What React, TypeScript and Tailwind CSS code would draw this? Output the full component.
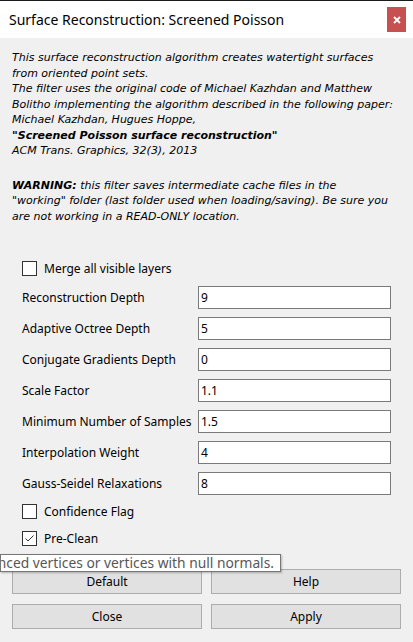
import React from "react";

const ui = "font-['Noto_Sans',sans-serif]";
const desc = "font-['DejaVu_Sans',sans-serif]";

const fields = [
  { label: "Reconstruction Depth", value: "9" },
  { label: "Adaptive Octree Depth", value: "5" },
  { label: "Conjugate Gradients Depth", value: "0" },
  { label: "Scale Factor", value: "1.1" },
  { label: "Minimum Number of Samples", value: "1.5" },
  { label: "Interpolation Weight", value: "4" },
  { label: "Gauss-Seidel Relaxations", value: "8" },
];

function CheckBox({ label, checked }: { label: string; checked?: boolean }) {
  return (
    <div className="flex items-center gap-[7px] h-[15px]">
      <div className="w-[15px] h-[15px] border border-[#333333] bg-white flex items-center justify-center">
        {checked && (
          <svg width="11" height="11" viewBox="0 0 11 11">
            <path d="M1.5 5.5 L4 8 L9.5 2.5" fill="none" stroke="#333" strokeWidth="1" />
          </svg>
        )}
      </div>
      <span className="text-[12px] text-black leading-none">{label}</span>
    </div>
  );
}

function Btn({ children }: { children: React.ReactNode }) {
  return (
    <button className="flex-1 h-[25px] bg-[#e1e1e1] border border-[#adadad] text-[12px] text-black">
      {children}
    </button>
  );
}

export default function App() {
  return (
    <div className={`relative w-[413px] h-[642px] bg-[#f0f0f0] border-t border-[#1a1a1a] overflow-hidden ${ui}`}>
      {/* title bar */}
      <div className="h-[37px] bg-white flex items-center justify-between pl-[9px] pr-[7px]">
        <span className="text-[14px] text-black">Surface Reconstruction: Screened Poisson</span>
        <div className="w-[19px] h-[25px] bg-[#c75050] flex items-center justify-center">
          <svg width="8" height="8" viewBox="0 0 8 8">
            <path d="M1 1 L7 7 M7 1 L1 7" stroke="white" strokeWidth="1.8" />
          </svg>
        </div>
      </div>

      <div className={`px-[12px] pt-[12px] text-[11px] leading-[15.5px] italic text-black whitespace-nowrap ${desc}`}>
        <p>
          This surface reconstruction algorithm creates watertight surfaces
          <br />
          from oriented point sets.
        </p>
        <p>
          The filter uses the original code of Michael Kazhdan and Matthew
          <br />
          Bolitho implementing the algorithm described in the following paper:
        </p>
        <p>Michael Kazhdan, Hugues Hoppe,</p>
        <p className="font-bold">"Screened Poisson surface reconstruction"</p>
        <p>ACM Trans. Graphics, 32(3), 2013</p>
        <p className="mt-[19px]">
          <b>WARNING:</b> this filter saves intermediate cache files in the
          <br />
          "working" folder (last folder used when loading/saving). Be sure you
          <br />
          are not working in a READ-ONLY location.
        </p>
      </div>

      <div className="px-[22px] pt-[37px]">
        <CheckBox label="Merge all visible layers" />
        <div className="mt-[10px] flex flex-col gap-[8px]">
          {fields.map((f) => (
            <div key={f.label} className="flex items-center">
              <span className="w-[176px] text-[12px] text-black whitespace-nowrap">{f.label}</span>
              <div className="flex-1 h-[23px] bg-white border border-[#7a7a7a] flex items-center px-[2px] text-[12px] text-black">
                {f.value}
              </div>
            </div>
          ))}
        </div>
        <div className="mt-[9px] flex flex-col gap-[12px]">
          <CheckBox label="Confidence Flag" />
          <CheckBox label="Pre-Clean" checked />
        </div>
      </div>

      <div className="px-[12px] mt-[23px] flex flex-col gap-[10px]">
        <div className="flex gap-[9px]">
          <Btn>Default</Btn>
          <Btn>Help</Btn>
        </div>
        <div className="flex gap-[9px]">
          <Btn>Close</Btn>
          <Btn>Apply</Btn>
        </div>
      </div>

      {/* tooltip */}
      <div className="absolute left-0 top-[553px] w-[281px] h-[18px] bg-white border border-[#767676] shadow-[1px_1px_2px_rgba(0,0,0,0.25)] flex justify-end items-center overflow-hidden pr-[6px]">
        <span className="whitespace-nowrap text-[13.8px] text-[#575757]">
          Remove unreferenced vertices or vertices with null normals.
        </span>
      </div>
    </div>
  );
}
